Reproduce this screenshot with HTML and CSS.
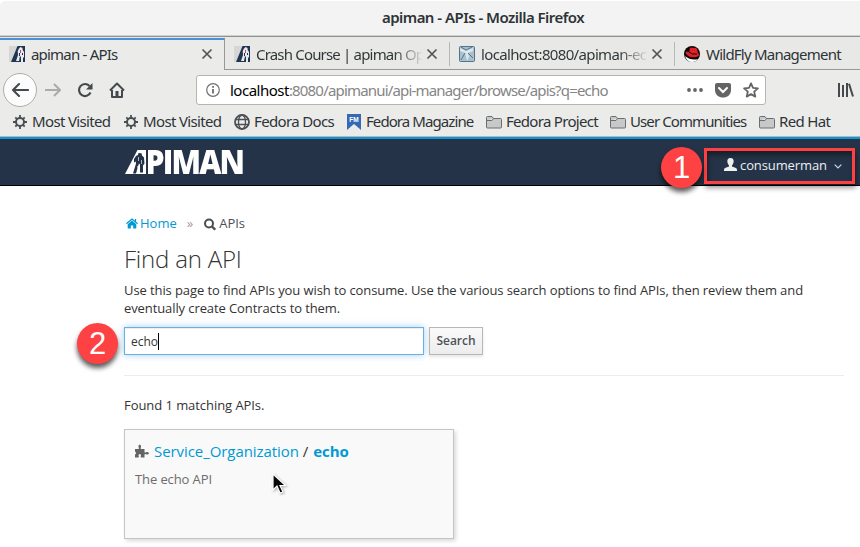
FILE: index.html
```html
<!DOCTYPE html>
<html lang="en">
<head>
<meta charset="utf-8">
<title>apiman - APIs</title>
<link rel="stylesheet" href="styles.css">
</head>
<body>
<svg class="defs" width="0" height="0">
  <symbol id="apiman" viewBox="0 0 16 16"><path fill="#d5d6d5" d="M0 0h16v16H0z"/><path fill="#203650" d="M8.500 0H16v16H2z"/><path fill="#e7eaf0" d="M10 2.500 11.500 1l2 1 .2 2 1.300 2v5l-1 1v4h-2v-5l-1-1-1 5H7l2-6-.3-4z"/><path fill="#d84745" d="M11 4h1v3h-1z"/><path fill="#203650" d="M13 7h1v2h-1zM10 7h1v3h-1z"/></symbol>
  <symbol id="close" viewBox="0 0 12 12"><path d="m1.500 1.500 9 9m0-9-9 9" fill="none" stroke="#515557" stroke-width="1.700"/></symbol>
  <symbol id="gear" viewBox="0 0 16 16"><g fill="none" stroke="#484f53"><circle cx="8" cy="8" r="4" stroke-width="2"/><path stroke-width="1.800" d="M8 1v3m0 8v3M1 8h3m8 0h3M3.300 3.300l2 2m5.400 5.400 2 2M12.700 3.300l-2 2m-5.400 5.400-2 2"/></g></symbol>
  <symbol id="folder" viewBox="0 0 16 16"><path fill="#c7c8c8" stroke="#6b6e70" d="M.5 13V3.500q0-1 1-1H6l1.500 2h7q1 0 1 1V13q0 1-1 1h-13q-1 0-1-1zM.5 6.500H6l1.500-2"/></symbol>
</svg>

<header class="titlebar">apiman - APIs - Mozilla Firefox</header>

<nav class="tabs">
  <div class="tab active"><svg class="favicon"><use href="#apiman"/></svg><span class="label t1">apiman - APIs</span><svg class="close"><use href="#close"/></svg></div>
  <div class="tab"><svg class="favicon"><use href="#apiman"/></svg><span class="label t2 fade">Crash Course | apiman Op</span><svg class="close"><use href="#close"/></svg></div>
  <div class="tab"><svg class="favicon" viewBox="0 0 16 16"><rect x=".5" y=".5" width="15" height="15" rx="1" fill="#a9c0ce" stroke="#53758a"/><path fill="#dce8ec" d="M1 2 7 5l7-3v3L9 7l1 4-2 4-1-5-1-3-5-2z"/><path stroke="#55788d" fill="none" d="m2 1 5 3 6-3M6 7l-4 7m7-7 5 5"/></svg><span class="label t3 fade">localhost:8080/apiman-ec</span><svg class="close"><use href="#close"/></svg></div>
  <div class="tab last"><svg class="favicon" viewBox="0 0 16 16"><circle cx="8" cy="8" r="8" fill="#090909"/><path fill="#fff" d="M1 10q6 5 13 3-2 3-6 3-5 0-7-6z"/><path fill="#df2026" d="M2 6q1-1 3 0l1-4q1-1 3 0 3-1 4 1l1 4q3 3-2 4-6 1-9-2Q1 7 2 6z"/><path d="M5 6q3 3 8 2" fill="none" stroke="#160909"/></svg><span class="label t4">WildFly Management</span></div>
</nav>

<div class="toolbar">
  <div class="back"><svg width="18" height="16" viewBox="0 0 18 16"><path d="M17 8H2m6-6L2 8l6 6" fill="none" stroke="#43494d" stroke-width="2.100" stroke-linecap="round" stroke-linejoin="round"/></svg></div>
  <svg class="forward" width="16" height="14" viewBox="0 0 16 14"><path d="M0 7h14M9 1l6 6-6 6" fill="none" stroke="#a9abac" stroke-width="2"/></svg>
  <svg class="reload" width="16" height="16" viewBox="0 0 16 16"><path d="M13.500 10.500A6 6 0 1 1 12.500 4" fill="none" stroke="#43494d" stroke-width="2.200"/><path fill="#43494d" d="M15.500 1v6.500H9z"/></svg>
  <svg class="home" width="16" height="16" viewBox="0 0 16 16"><path d="M1 8.500 8 1.500l7 7M3 8v7h10V8" fill="none" stroke="#43494d" stroke-width="2" stroke-linejoin="round"/><path fill="#43494d" d="M6.500 15V9h3v6z"/></svg>
  <div class="urlbar">
    <svg width="14" height="14" viewBox="0 0 14 14"><circle cx="7" cy="7" r="6.300" fill="none" stroke="#707070" stroke-width="1.200"/><path stroke="#666" stroke-width="1.700" d="M7 6v4.500M7 3v1.700"/></svg>
    <span class="url"><b>localhost</b>:8080/apimanui/api-manager/browse/apis?q=echo</span>
    <svg class="dots" width="16" height="4" viewBox="0 0 16 4"><g fill="#646464"><circle cx="2" cy="2" r="1.900"/><circle cx="8" cy="2" r="1.900"/><circle cx="14" cy="2" r="1.900"/></g></svg>
    <svg class="pocket" width="16" height="15" viewBox="0 0 16 15"><path fill="#646464" d="M2 0h12q2 0 2 2v5c0 10-16 10-16 0V2q0-2 2-2z"/><path d="m4 5 4 4 4-4" fill="none" stroke="#fff" stroke-width="2" stroke-linecap="round"/></svg>
    <svg class="star" width="16" height="16" viewBox="0 0 16 16"><path d="m8 1.400 2 4.500 4.900.5-3.700 3.300 1.100 4.900L8 12.100l-4.300 2.500 1.100-4.900L1.100 6.400 6 5.900z" fill="none" stroke="#646464" stroke-width="1.800" stroke-linejoin="round"/></svg>
  </div>
  <svg class="library" width="16" height="14" viewBox="0 0 16 14"><path d="M1 0v14M5 2v12M9 0v14M11 .8 15 13.500" fill="none" stroke="#43494d" stroke-width="2"/></svg>
</div>

<nav class="bookmarks">
  <a class="b1"><svg><use href="#gear"/></svg><span>Most Visited</span></a>
  <a class="b2"><svg><use href="#gear"/></svg><span>Most Visited</span></a>
  <a class="b3"><svg viewBox="0 0 16 16"><g fill="none" stroke="#4b5154" stroke-width="1.300"><circle cx="8" cy="8" r="7" stroke-width="1.800"/><ellipse cx="8" cy="8" rx="3.500" ry="7"/><path d="M1.500 5.500h13m-13 5h13"/></g></svg><span>Fedora Docs</span></a>
  <a class="b4"><svg viewBox="0 0 16 16"><path fill="#356ab3" d="M1 0h14v16l-4-3.500L8 10l-3 2.500L1 16z"/><text x="8" y="7.500" text-anchor="middle" class="fm">FM</text></svg><span>Fedora Magazine</span></a>
  <a class="b5"><svg><use href="#folder"/></svg><span>Fedora Project</span></a>
  <a class="b6"><svg><use href="#folder"/></svg><span>User Communities</span></a>
  <a class="b7"><svg><use href="#folder"/></svg><span>Red Hat</span></a>
</nav>

<div class="masthead">
  <div class="logo"><span class="word">APIMAN</span>
    <svg class="emblem" width="23" height="25" viewBox="0 0 23 25"><path fill="#243347" d="M0 0h23v25H0z"/><path fill="#fff" d="M12.500 0H21v24H0z"/><path fill="#243347" d="m13.500 3 3 .2.500 2.300 2 2 .5 6-1.500 2v7h-3v-8l-1-1-1 3-2 7H8l3-10-.2-2-1.800 1V9l2-3 2-1z"/><path fill="#a9b1ba" d="M13 7h1v4h-1zm3 3h1v4h-1zm-4 6h1v3h-1z"/></svg>
  </div>
  <div class="user"><span class="step one">1</span><svg width="13" height="13" viewBox="0 0 13 13"><path fill="#eeeff0" d="M6.500 0C9 0 10 1.700 9.600 4 9.300 6 8.500 6.500 8 7.500v1l4 1.500q1 .5 1 2v1H0v-1q0-1.500 1-2l4-1.500v-1C4.500 6.500 3.700 6 3.400 4 3 1.700 4 0 6.500 0z"/></svg><span class="username">consumerman</span><svg class="chevron" width="8" height="5" viewBox="0 0 8 5"><path d="m.7.7 3.300 3.300L7.300.7" fill="none" stroke="#d3d7da" stroke-width="1.200"/></svg></div>
</div>

<main>
  <div class="crumbs"><svg width="12" height="11" viewBox="0 0 12 11"><path fill="#0099d3" d="m6 2.500 4.300 3.700V10q0 .6-.6.6H7.200V7.500H4.800v3.100H2.300q-.6 0-.6-.6V6.200z"/><path fill="none" stroke="#0099d3" stroke-width="1.200" d="M.4 5.800 6 1l5.600 4.800M9.500 1v3"/></svg><a>Home</a><span class="sep">»</span><svg class="search-icon" width="12" height="13" viewBox="0 0 12 13"><circle cx="5" cy="5.500" r="4" fill="none" stroke="#4b4e51" stroke-width="2"/><path d="m8 8.500 3.200 3.200" stroke="#4b4e51" stroke-width="2.300"/></svg><span>APIs</span></div>
  <h1>Find an API</h1>
  <p class="intro">Use this page to find APIs you wish to consume. Use the various search options to find APIs, then review them and<br>eventually create Contracts to them.</p>
  <div class="search"><span class="step two">2</span><div class="field">echo<i></i></div><button>Search</button></div>
  <hr>
  <p class="found">Found 1 matching APIs.</p>
  <section class="card">
    <h2><svg width="14" height="14" viewBox="0 0 14 14"><path fill="#626466" d="M0 5h3.500q1-.5 0-2Q3 1 4.700.5 6.500 1 6 3q-1 1.500 0 2h3.500v3q.5 1 2 0 2-.3 2.500 1.300-.5 1.700-2.500 1.200-1.500-1-2 0V13.500H6q-.8-.5 0-2 0-1.500-1.300-1.500-1.200 0-1.200 1.500.8 1.500 0 2H0v-3q1-.5 1-1.500T0 7.500z"/></svg><a>Service_Organization</a><span class="slash">/</span><a class="name">echo</a></h2>
    <p>The echo API</p>
    <svg class="cursor" width="16" height="22" viewBox="0 0 16 22"><path d="M1 1v16l4-4 3 7 3-1-3-6.500h5.500z" fill="#080808" stroke="#fff" stroke-width="1.200"/></svg>
  </section>
</main>
</body>
</html>
```
FILE: styles.css
```css
* { box-sizing: border-box; }
body { margin: 0; width: 860px; height: 547px; overflow: hidden; background: #fff; color: #333; font: 13px/18px "Open Sans", sans-serif; }
svg { display: block; flex: none; }
.defs { position: absolute; }
p, h1, h2 { margin: 0; }

.titlebar { height: 37px; border-top: 1px solid #fff; border-bottom: 1px solid #929290; border-radius: 6px 0 0; background: #f3f3f3; box-shadow: inset 0 -1px #d0d0ce; padding: 0 0 2px 106px; text-align: center; font: 600 15px/33px "Noto Sans", sans-serif; letter-spacing: -.53px; color: #2e3436; }
.tabs { display: flex; height: 33px; background: #e8e8e6; color: #2e3436; }
.tab { position: relative; display: flex; align-items: center; width: 225px; padding: 1px 12px 0 9px; border-bottom: 1px solid #989896; font: 15px/20px "Noto Sans", sans-serif; }
.tab.active { width: 225px; border-top: 2px solid #4a90d9; border-bottom: 0; border-right: 1px solid #989896; background: #ebebea; margin-top: 1px; padding: 0 11px 2px 9px; }
.tab:nth-child(2)::after, .tab:nth-child(3)::after { content: ""; position: absolute; right: 0; top: 5px; width: 1px; height: 24px; background: #b8b8b6; }
.tab.last { width: 185px; padding-right: 0; }
.favicon { width: 16px; height: 16px; }
.label { flex: 1 1 0; min-width: 0; margin-left: 6px; white-space: nowrap; }
.t1 { letter-spacing: -.8px; }
.t2 { letter-spacing: -.82px; }
.t3 { letter-spacing: -.65px; }
.t4 { letter-spacing: -.77px; }
.fade { background: linear-gradient(to right, #2e3436 138px, #e8e8e6 168px); -webkit-background-clip: text; background-clip: text; color: transparent; }
.close { width: 12px; height: 12px; margin-left: 4px; }

.toolbar { display: flex; align-items: center; height: 40px; background: #ebebea; padding-left: 3px; }
.back { display: flex; align-items: center; justify-content: center; width: 34px; height: 34px; border: 1px solid #adadab; border-radius: 50%; background: #fcfcfc; }
.forward { margin-left: 8px; }
.reload { margin-left: 16px; }
.home { margin-left: 16px; }
.urlbar { display: flex; align-items: center; width: 570px; height: 30px; margin-left: 71px; padding: 0 6px 0 9px; border: 1px solid #b5b5b3; border-radius: 3px; background: #fff; }
.url { flex: 1; margin-left: 10px; padding-bottom: 1px; font: 15px/22px "Noto Sans", sans-serif; letter-spacing: -.82px; color: #858585; white-space: nowrap; }
.url b { font-weight: 400; color: #000; letter-spacing: -.5px; }
.pocket { margin-left: 12px; }
.star { margin-left: 12px; }
.library { margin-left: 72px; }

.bookmarks { display: flex; height: 27px; background: #ebebea; border-bottom: 1px solid #b5b5b3; padding-left: 12px; color: #2e3436; font: 15px/22px "Noto Sans", sans-serif; }
.bookmarks a { display: flex; flex: none; align-items: center; height: 24px; white-space: nowrap; color: #2e3436; letter-spacing: -.65px; }
.bookmarks svg { width: 16px; height: 16px; margin-right: 4px; }
.bookmarks span { padding-bottom: 2px; }
.fm { font: bold 6.500px "Liberation Sans", sans-serif; fill: #fff; letter-spacing: 0; }
.b1, .b2 { width: 111px; }
.b3 { width: 112px; }
.bookmarks .b4 { width: 140px; letter-spacing: -.92px; }
.bookmarks .b5 { width: 124px; letter-spacing: -.7px; }
.bookmarks .b6 { width: 149px; letter-spacing: -.9px; }

.masthead { display: flex; justify-content: space-between; height: 49px; border-top: 2px solid #0d96d5; border-bottom: 1px solid #000; background: #243347; }
.logo { position: relative; width: 119px; height: 25px; margin: 11px 0 0 125px; }
.word { display: block; width: 126px; transform: scaleX(.925); transform-origin: left; font: 800 33px/24px "Open Sans", sans-serif; letter-spacing: -2px; color: #fff; }
.emblem { position: absolute; left: 0; top: 0; }
.user { position: relative; display: flex; align-items: center; width: 151px; height: 36px; margin: 9px 5px 0 0; padding: 0 0 3px 17px; border: 3px solid #fe4042; box-shadow: 1px 4px 5px rgba(0,0,0,.4), inset 1px 4px 5px rgba(0,0,0,.4); color: #edeeef; }
.username { margin-left: 3px; font-size: 13px; letter-spacing: -.1px; }
.chevron { margin-left: 7px; margin-top: 3px; }
.step { position: absolute; display: block; width: 41px; height: 41px; border-radius: 50%; background: #fe4143; box-shadow: 0 4px 5px rgba(0,0,0,.65); color: #fff; text-align: center; font: 31px/41px "Liberation Sans", sans-serif; }
.one { left: -46px; top: -4px; }
.two { left: -47px; top: -4px; }

main { padding: 27px 16px 0 124px; }
.crumbs { display: flex; align-items: center; height: 20px; padding-left: 2px; color: #4d5258; }
a { color: #0099d3; }
.crumbs a { margin-left: 2px; }
.sep { margin: 0 11px 0 10px; color: #9c9c9c; }
.search-icon { margin-right: 3px; margin-top: 2px; }
h1 { margin-top: 13px; font: 300 24px/26px "Open Sans", sans-serif; letter-spacing: -.2px; }
.intro { margin-top: 9px; white-space: nowrap; letter-spacing: -.095px; }
.search { position: relative; display: flex; gap: 5px; margin-top: 10px; }
.field { display: flex; align-items: center; width: 300px; height: 28px; border: 1px solid #66afe9; padding: 1px 6px 0; background: #fff; box-shadow: inset 0 1px 1px rgba(0,0,0,.075), 0 0 7px rgba(102,175,233,.6); font: 12px/18px "Open Sans", sans-serif; }
.field i { width: 1px; height: 17px; background: #000; }
button { width: 54px; height: 28px; padding: 0; border: 1px solid #b7b7b7; background: linear-gradient(#fafafa, #ededed); box-shadow: 0 2px 3px rgba(3,3,3,.1); color: #4d5258; font: 600 12px/26px "Open Sans", sans-serif; }
hr { height: 1px; margin: 20px 0 0; border: 0; background: #ececec; }
.found { margin-top: 20px; letter-spacing: -.06px; }
.card { position: relative; width: 330px; height: 110px; margin-top: 15px; padding: 10px 10px; border: 1px solid #c5c5c5; background: #f9f9f9; box-shadow: 2px 2px 4px rgba(0,0,0,.15); color: #6d6d6d; }
h2 { display: flex; align-items: center; font: 15px/22px "Open Sans", sans-serif; letter-spacing: -.07px; color: #333; }
h2 a { margin-left: 5px; }
.slash { margin-left: 4px; }
h2 .name { margin-left: 5px; font-weight: 700; }
.card p { margin-top: 8px; letter-spacing: -.1px; }
.cursor { position: absolute; left: 147px; top: 43px; filter: drop-shadow(1px 1px 1px rgba(0,0,0,.3)); }
```
